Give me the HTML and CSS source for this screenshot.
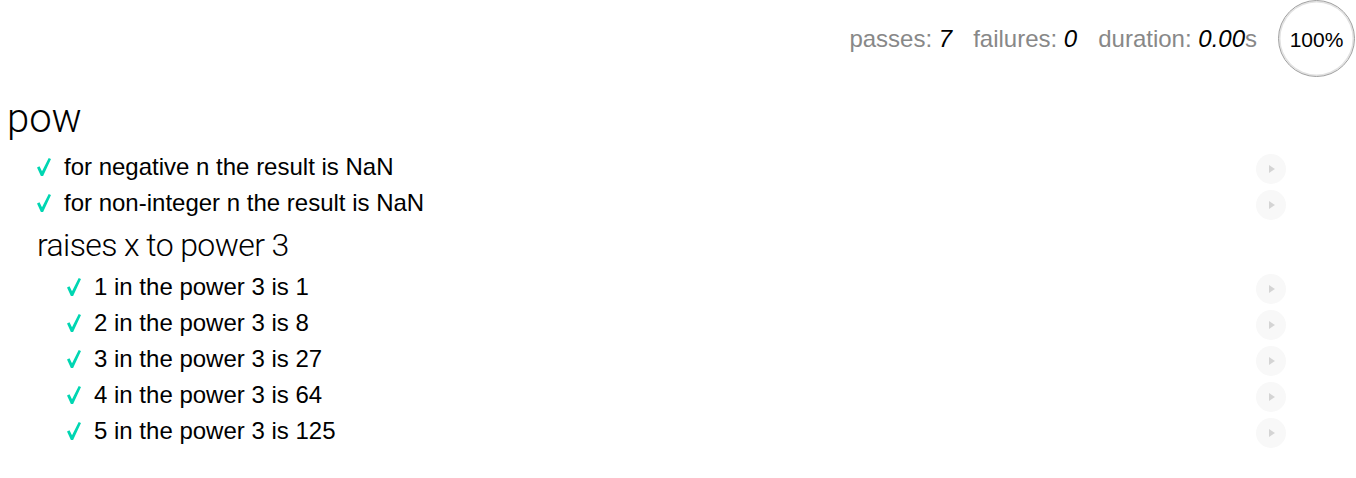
FILE: index.html
```html
<!DOCTYPE html>
<html>
<head>
<meta charset="utf-8">
<title>Mocha Tests</title>
<link rel="stylesheet" href="styles.css">
</head>
<body>
<div class="mocha">
  <div class="stats">
    <ul class="stats-list">
      <li class="stat">passes: <em>7</em></li>
      <li class="stat">failures: <em>0</em></li>
      <li class="stat">duration: <em>0.00</em>s</li>
    </ul>
    <div class="progress"><span class="progress-text">100%</span></div>
  </div>

  <ul class="report">
    <li class="suite">
      <h1 class="suite-title">pow</h1>
      <ul class="suite-body">
        <li class="test">
          <svg class="check" viewBox="0 0 14 18" width="14" height="18"><path d="M0 9.4 L2.5 8.2 L5 13.3 L11.7 0 L14 1 L6.1 18 L3.9 18 Z"/></svg>
          <span class="test-title">for negative n the result is NaN</span>
          <span class="replay"><svg viewBox="0 0 6 8" width="6" height="8"><path d="M0 0 L6 4 L0 8 Z"/></svg></span>
        </li>
        <li class="test">
          <svg class="check" viewBox="0 0 14 18" width="14" height="18"><path d="M0 9.4 L2.5 8.2 L5 13.3 L11.7 0 L14 1 L6.1 18 L3.9 18 Z"/></svg>
          <span class="test-title">for non-integer n the result is NaN</span>
          <span class="replay"><svg viewBox="0 0 6 8" width="6" height="8"><path d="M0 0 L6 4 L0 8 Z"/></svg></span>
        </li>
        <li class="suite nested">
          <h1 class="suite-title sub">raises x to power 3</h1>
          <ul class="suite-body">
            <li class="test">
              <svg class="check" viewBox="0 0 14 18" width="14" height="18"><path d="M0 9.4 L2.5 8.2 L5 13.3 L11.7 0 L14 1 L6.1 18 L3.9 18 Z"/></svg>
              <span class="test-title">1 in the power 3 is 1</span>
              <span class="replay"><svg viewBox="0 0 6 8" width="6" height="8"><path d="M0 0 L6 4 L0 8 Z"/></svg></span>
            </li>
            <li class="test">
              <svg class="check" viewBox="0 0 14 18" width="14" height="18"><path d="M0 9.4 L2.5 8.2 L5 13.3 L11.7 0 L14 1 L6.1 18 L3.9 18 Z"/></svg>
              <span class="test-title">2 in the power 3 is 8</span>
              <span class="replay"><svg viewBox="0 0 6 8" width="6" height="8"><path d="M0 0 L6 4 L0 8 Z"/></svg></span>
            </li>
            <li class="test">
              <svg class="check" viewBox="0 0 14 18" width="14" height="18"><path d="M0 9.4 L2.5 8.2 L5 13.3 L11.7 0 L14 1 L6.1 18 L3.9 18 Z"/></svg>
              <span class="test-title">3 in the power 3 is 27</span>
              <span class="replay"><svg viewBox="0 0 6 8" width="6" height="8"><path d="M0 0 L6 4 L0 8 Z"/></svg></span>
            </li>
            <li class="test">
              <svg class="check" viewBox="0 0 14 18" width="14" height="18"><path d="M0 9.4 L2.5 8.2 L5 13.3 L11.7 0 L14 1 L6.1 18 L3.9 18 Z"/></svg>
              <span class="test-title">4 in the power 3 is 64</span>
              <span class="replay"><svg viewBox="0 0 6 8" width="6" height="8"><path d="M0 0 L6 4 L0 8 Z"/></svg></span>
            </li>
            <li class="test">
              <svg class="check" viewBox="0 0 14 18" width="14" height="18"><path d="M0 9.4 L2.5 8.2 L5 13.3 L11.7 0 L14 1 L6.1 18 L3.9 18 Z"/></svg>
              <span class="test-title">5 in the power 3 is 125</span>
              <span class="replay"><svg viewBox="0 0 6 8" width="6" height="8"><path d="M0 0 L6 4 L0 8 Z"/></svg></span>
            </li>
          </ul>
        </li>
      </ul>
    </li>
  </ul>
</div>
</body>
</html>
```

FILE: styles.css
```css
html, body {
  margin: 0;
  padding: 0;
  background: #fff;
}

.mocha {
  font-family: "Liberation Sans", Arial, sans-serif;
  color: #000;
}

ul {
  list-style: none;
  margin: 0;
  padding: 0;
}

/* stats header */
.stats {
  display: flex;
  justify-content: flex-end;
  align-items: center;
  gap: 21px;
  height: 77px;
  padding-right: 1px;
  font-size: 24px;
  color: #888;
}

.stats-list {
  display: flex;
  gap: 21px;
}

.stat em {
  color: #000;
  font-style: italic;
}

.progress {
  width: 77px;
  height: 77px;
  box-sizing: border-box;
  border-radius: 50%;
  border: 1.5px solid #9f9f9f;
  box-shadow: inset 0 0 0 1.5px #e2e2e2;
  display: flex;
  align-items: center;
  justify-content: center;
  align-self: flex-start;
}

.progress-text {
  font-size: 21px;
  color: #000;
  padding-top: 3px;
}

/* report */
.report {
  margin-top: 12px;
  padding-left: 7px;
  margin-right: 70px;
}

.suite-title {
  margin: 0;
  font-family: Roboto, "Liberation Sans", sans-serif;
  font-weight: 300;
  font-size: 40px;
  line-height: 60px;
  color: #000;
}

.suite-title.sub {
  font-size: 32px;
  line-height: 48px;
  letter-spacing: -0.6px;
}

.suite-body {
  margin-left: 30px;
}

.test {
  display: flex;
  align-items: center;
  height: 36px;
  font-size: 24px;
  line-height: 36px;
}

.check {
  flex: none;
  margin-right: 13px;
  fill: #00d6b2;
}

.test-title {
  flex: 1;
}

.replay {
  flex: none;
  width: 30px;
  height: 30px;
  border-radius: 50%;
  background: #f8f8f8;
  display: flex;
  align-items: center;
  justify-content: center;
  align-self: flex-start;
  margin-top: 5px;
}

.replay svg {
  fill: #d4d4d4;
  margin-left: 1px;
}
```
